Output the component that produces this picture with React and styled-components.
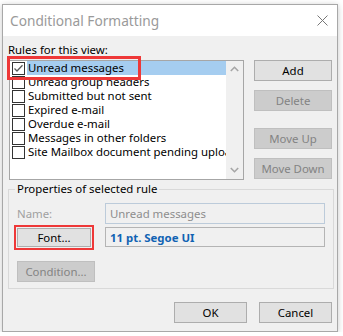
import React from 'react';
import styled, { createGlobalStyle } from 'styled-components';

const Global = createGlobalStyle`
  html, body { margin: 0; padding: 0; background: #ffffff; }
  body { font-family: "Segoe UI", "Noto Sans", sans-serif; font-size: 11.4px; color: #000; }
  * { box-sizing: border-box; }
`;

const Window = styled.div`
  width: 336px;
  height: 328px;
  margin: 4px 0 0 2px;
  border: 1px solid #a8a8a8;
  background: #f0f0f0;
  box-shadow: 0 1px 6px rgba(0, 0, 0, 0.22);
  display: flex;
  flex-direction: column;
`;

const TitleBar = styled.div`
  height: 31px;
  flex: none;
  background: #ffffff;
  display: flex;
  align-items: center;
  justify-content: space-between;
  padding: 0 9px 0 7px;
`;

const Title = styled.span`
  font-size: 13.7px;
  color: #9a9a9a;
`;

const Body = styled.div`
  display: flex;
  flex-direction: column;
  padding: 6px 5px 0 5px;
`;

const Label = styled.div`
  height: 16px;
  line-height: 16px;
  color: ${p => (p.$disabled ? '#a0a0a0' : '#000')};
  white-space: nowrap;
`;

const TopRow = styled.div`
  display: flex;
  margin-top: 2px;
  gap: 10px;
`;

const ListBox = styled.div`
  position: relative;
  width: 235px;
  height: 120px;
  margin-left: 1px;
  border: 1px solid #a6a6a6;
  background: #fff;
  display: flex;
`;

const Items = styled.div`
  flex: 1;
  min-width: 0;
  overflow: hidden;
  display: flex;
  flex-direction: column;
`;

const Row = styled.div`
  height: 14px;
  display: flex;
  align-items: center;
  padding-left: 2px;
`;

const Box = styled.span`
  flex: none;
  width: 13px;
  height: 13px;
  border: 1px solid #333;
  background: #fff;
  display: flex;
  align-items: center;
  justify-content: center;
`;

const ItemText = styled.span`
  flex: 1;
  min-width: 0;
  margin-left: 2px;
  padding-left: 1px;
  height: 14px;
  line-height: 14px;
  white-space: nowrap;
  overflow: hidden;
  background: ${p => (p.$selected ? '#a5cdf0' : 'transparent')};
`;

const ScrollBar = styled.div`
  width: 17px;
  flex: none;
  background: #f0f0f0;
  display: flex;
  flex-direction: column;
  justify-content: space-between;
  align-items: center;
  padding: 5px 0 6px;
`;

const RedMark = styled.div`
  position: absolute;
  left: -3px;
  top: -5px;
  width: 134px;
  height: 24px;
  border: 3px solid #ee3838;
  pointer-events: none;
`;

const ButtonColumn = styled.div`
  display: flex;
  flex-direction: column;
  width: 78px;
`;

const Button = styled.button`
  font-family: inherit;
  font-size: 11.4px;
  width: ${p => p.$w || 78}px;
  height: ${p => p.$h || 21}px;
  margin-top: ${p => p.$mt || 0}px;
  padding: 0;
  border: 1px solid ${p => (p.disabled ? '#bfbfbf' : '#adadad')};
  background: ${p => (p.disabled ? '#cccccc' : '#e1e1e1')};
  color: ${p => (p.disabled ? '#838383' : '#000')};
  display: flex;
  align-items: center;
  justify-content: center;
  flex: none;
`;

const Group = styled.div`
  position: relative;
  margin-top: 9px;
  width: 326px;
  height: 100px;
  border: 1px solid #d9d9d9;
  padding: 13px 0 0 8px;
  display: flex;
  flex-direction: column;
`;

const Legend = styled.span`
  position: absolute;
  left: 6px;
  top: -9px;
  padding: 0 2px;
  background: #f0f0f0;
  line-height: 16px;
`;

const FieldRow = styled.div`
  display: flex;
  align-items: center;
  margin-top: ${p => p.$mt || 0}px;
`;

const LabelCell = styled.div`
  width: 88px;
  flex: none;
  display: flex;
  align-items: center;
`;

const Field = styled.div`
  width: 220px;
  height: ${p => p.$h}px;
  border: 1px solid ${p => (p.$variant === 'name' ? '#bccbda' : '#b4b4b4')};
  background: #f0f0f0;
  display: flex;
  align-items: center;
  padding-left: 4px;
  color: ${p => (p.$variant === 'name' ? '#8d8d8d' : '#1063b3')};
  font-weight: ${p => (p.$variant === 'name' ? 400 : 700)};
  white-space: nowrap;
`;

const FontWrap = styled.div`
  position: relative;
  display: flex;
`;

const FontMark = styled.div`
  position: absolute;
  left: -3px;
  top: -3px;
  right: -3px;
  bottom: -3px;
  border: 2.5px solid #ee3838;
  pointer-events: none;
`;

const Footer = styled.div`
  display: flex;
  justify-content: flex-end;
  gap: 12px;
  margin-top: 13px;
`;

const Chevron = ({ down }) => (
  <svg width="9" height="6" viewBox="0 0 9 6">
    <path
      d={down ? 'M0.8 1 L4.5 4.7 L8.2 1' : 'M0.8 5 L4.5 1.3 L8.2 5'}
      fill="none"
      stroke="#a6a6a6"
      strokeWidth="1.6"
    />
  </svg>
);

const CloseIcon = () => (
  <svg width="11" height="11" viewBox="0 0 11 11">
    <path d="M0.5 0.5 L10.5 10.5 M10.5 0.5 L0.5 10.5" stroke="#777" strokeWidth="1" fill="none" />
  </svg>
);

const CheckMark = () => (
  <svg width="11" height="11" viewBox="0 0 11 11">
    <path d="M1.5 5.5 L4 8 L9.5 2.2" fill="none" stroke="#5a5a5a" strokeWidth="1.3" />
  </svg>
);

const rules = [
  { text: 'Unread messages', checked: true, selected: true },
  { text: 'Unread group headers' },
  { text: 'Submitted but not sent' },
  { text: 'Expired e-mail' },
  { text: 'Overdue e-mail' },
  { text: 'Messages in other folders' },
  { text: 'Site Mailbox document pending upload' },
];

export default function App() {
  return (
    <>
      <Global />
      <Window>
        <TitleBar>
          <Title>Conditional Formatting</Title>
          <CloseIcon />
        </TitleBar>
        <Body>
          <Label>Rules for this view:</Label>
          <TopRow>
            <ListBox>
              <Items>
                {rules.map(r => (
                  <Row key={r.text}>
                    <Box>{r.checked && <CheckMark />}</Box>
                    <ItemText $selected={r.selected}>{r.text}</ItemText>
                  </Row>
                ))}
              </Items>
              <ScrollBar>
                <Chevron />
                <Chevron down />
              </ScrollBar>
              <RedMark />
            </ListBox>
            <ButtonColumn>
              <Button>Add</Button>
              <Button disabled $mt={9}>Delete</Button>
              <Button disabled $mt={17}>Move Up</Button>
              <Button disabled $mt={9}>Move Down</Button>
            </ButtonColumn>
          </TopRow>
          <Group>
            <Legend>Properties of selected rule</Legend>
            <FieldRow>
              <LabelCell>
                <Label $disabled>Name:</Label>
              </LabelCell>
              <Field $variant="name" $h={21}>Unread messages</Field>
            </FieldRow>
            <FieldRow $mt={3}>
              <LabelCell>
                <FontWrap>
                  <Button $w={74} $h={19}>Font...</Button>
                  <FontMark />
                </FontWrap>
              </LabelCell>
              <Field $variant="font" $h={20}>11 pt. Segoe UI</Field>
            </FieldRow>
            <FieldRow $mt={14}>
              <Button disabled $w={78} $h={21}>Condition...</Button>
            </FieldRow>
          </Group>
          <Footer>
            <Button $w={73}>OK</Button>
            <Button $w={73}>Cancel</Button>
          </Footer>
        </Body>
      </Window>
    </>
  );
}
